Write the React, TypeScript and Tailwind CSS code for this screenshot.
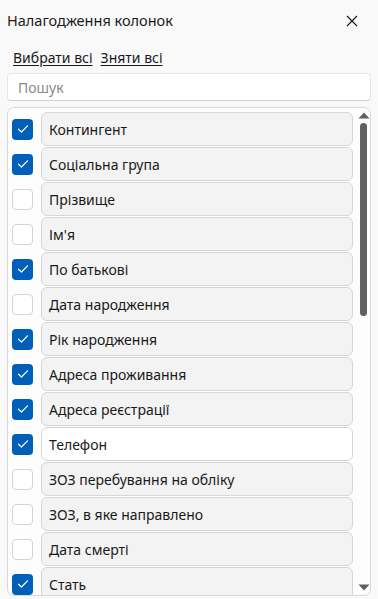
import React from "react";

const items: { label: string; checked: boolean; active?: boolean }[] = [
  { label: "Контингент", checked: true },
  { label: "Соціальна група", checked: true },
  { label: "Прізвище", checked: false },
  { label: "Ім'я", checked: false },
  { label: "По батькові", checked: true },
  { label: "Дата народження", checked: false },
  { label: "Рік народження", checked: true },
  { label: "Адреса проживання", checked: true },
  { label: "Адреса реєстрації", checked: true },
  { label: "Телефон", checked: true, active: true },
  { label: "ЗОЗ перебування на обліку", checked: false },
  { label: "ЗОЗ, в яке направлено", checked: false },
  { label: "Дата смерті", checked: false },
  { label: "Стать", checked: true },
];

function Check({ checked }: { checked: boolean }) {
  if (checked) {
    return (
      <div className="w-[21px] h-[21px] shrink-0 rounded-[4px] bg-[#005fb8] flex items-center justify-center">
        <svg width="12" height="10" viewBox="0 0 12 10" fill="none">
          <path d="M1.5 5.2 L4.5 8 L10.5 1.8" stroke="white" strokeWidth="1.2" strokeLinecap="round" strokeLinejoin="round" />
        </svg>
      </div>
    );
  }
  return <div className="w-[21px] h-[21px] shrink-0 rounded-[4px] bg-white border border-[#d4d4d4]" />;
}

export default function App() {
  return (
    <div
      className="w-[378px] h-[599px] bg-[#f9f9f9] overflow-hidden flex flex-col text-[#1a1a1a]"
      style={{ fontFamily: '"Segoe UI", "Noto Sans", "Liberation Sans", sans-serif' }}
    >
      <div className="flex items-center justify-between pl-[7px] pr-[20px] pt-[3px] h-[38px] shrink-0">
        <span className="text-[14.5px] leading-none">Налагодження колонок</span>
        <svg width="12" height="12" viewBox="0 0 12 12">
          <path d="M1 1 L11 11 M11 1 L1 11" stroke="#1a1a1a" strokeWidth="1.2" />
        </svg>
      </div>
      <div className="flex gap-[8px] pl-[13px] pt-[13px] h-[35px] shrink-0 text-[14px] leading-none">
        <span className="underline underline-offset-2">Вибрати всі</span>
        <span className="underline underline-offset-2">Зняти всі</span>
      </div>
      <div className="mx-[7px] h-[28px] shrink-0 bg-white border border-[#e5e5e5] border-b-[#d0d0d0] rounded-[4px] flex items-center pl-[10px] text-[14px] text-[#8a8a8a]">
        Пошук
      </div>
      <div className="mx-[7px] mt-[6px] flex-1 min-h-0 bg-[#fdfdfd] border border-[#d9d9d9] rounded-[7px] flex overflow-hidden">
        <div className="flex-1 min-w-0 overflow-hidden pl-[4px] pr-[1px] pt-[4px] flex flex-col gap-[1px]">
          {items.map((it) => (
            <div key={it.label} className="flex items-center gap-[8px] shrink-0">
              <Check checked={it.checked} />
              <div
                className={
                  "flex-1 h-[34px] rounded-[6px] border border-[#d6d6d6] flex items-center pl-[7px] text-[14px] " +
                  (it.active ? "bg-white" : "bg-[#f3f3f3]")
                }
              >
                {it.label}
              </div>
            </div>
          ))}
        </div>
        <div className="w-[16px] shrink-0 flex flex-col items-center pt-[4px] pb-[4px] pl-[3px]">
          <svg width="12" height="7" viewBox="0 0 12 7">
            <path d="M6 0.5 L11.5 6.5 L0.5 6.5 Z" fill="#5f5f5f" />
          </svg>
          <div className="mt-[4px] w-[7px] h-[193px] rounded-full bg-[#606060]" />
          <div className="flex-1" />
          <svg width="12" height="7" viewBox="0 0 12 7">
            <path d="M6 6.5 L11.5 0.5 L0.5 0.5 Z" fill="#5f5f5f" />
          </svg>
        </div>
      </div>
      <div className="h-[3px] shrink-0" />
    </div>
  );
}
